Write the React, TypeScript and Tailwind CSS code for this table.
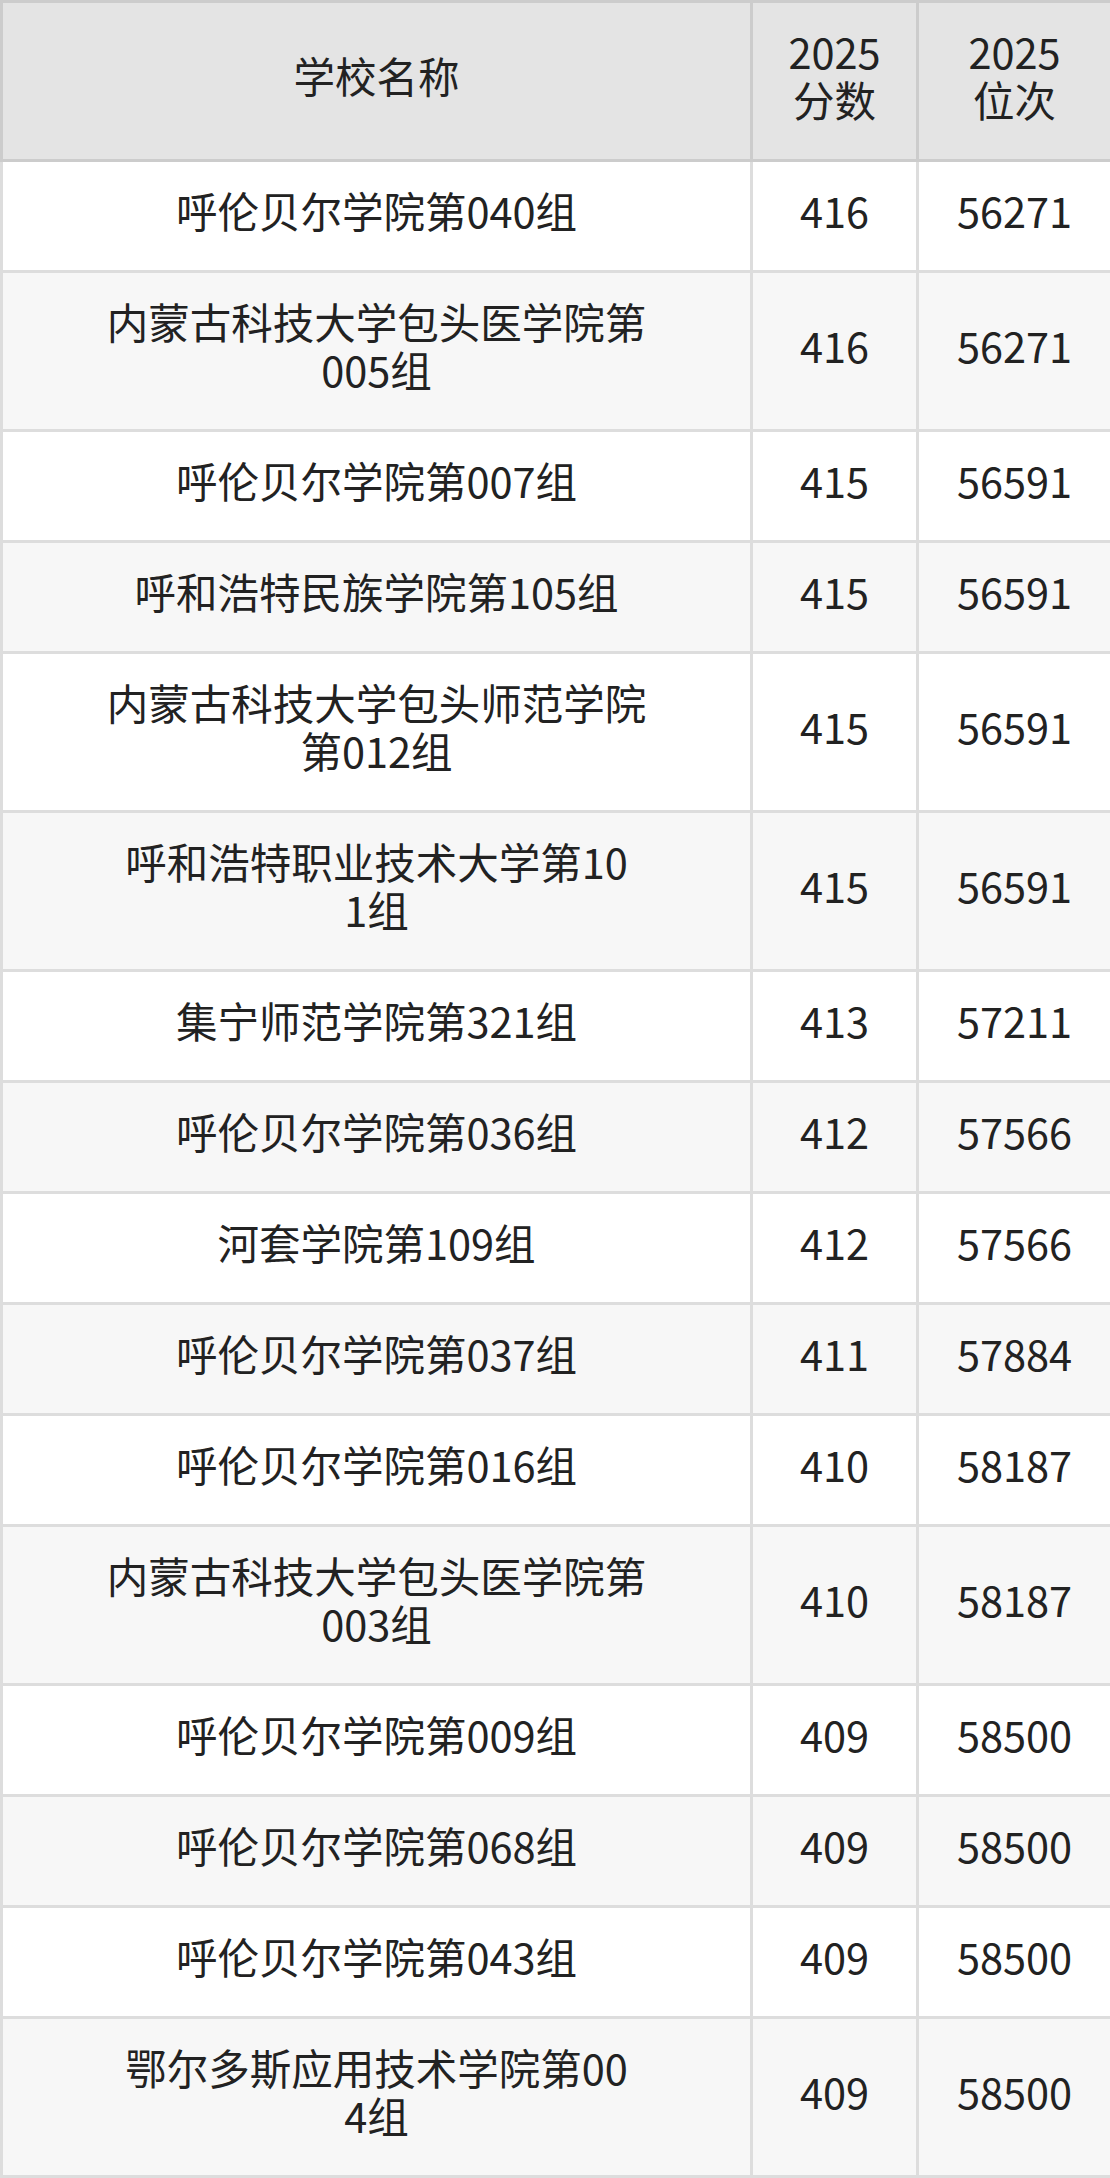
const rows: { name: string[]; score: string; rank: string }[] = [
  { name: ["呼伦贝尔学院第040组"], score: "416", rank: "56271" },
  { name: ["内蒙古科技大学包头医学院第", "005组"], score: "416", rank: "56271" },
  { name: ["呼伦贝尔学院第007组"], score: "415", rank: "56591" },
  { name: ["呼和浩特民族学院第105组"], score: "415", rank: "56591" },
  { name: ["内蒙古科技大学包头师范学院", "第012组"], score: "415", rank: "56591" },
  { name: ["呼和浩特职业技术大学第10", "1组"], score: "415", rank: "56591" },
  { name: ["集宁师范学院第321组"], score: "413", rank: "57211" },
  { name: ["呼伦贝尔学院第036组"], score: "412", rank: "57566" },
  { name: ["河套学院第109组"], score: "412", rank: "57566" },
  { name: ["呼伦贝尔学院第037组"], score: "411", rank: "57884" },
  { name: ["呼伦贝尔学院第016组"], score: "410", rank: "58187" },
  { name: ["内蒙古科技大学包头医学院第", "003组"], score: "410", rank: "58187" },
  { name: ["呼伦贝尔学院第009组"], score: "409", rank: "58500" },
  { name: ["呼伦贝尔学院第068组"], score: "409", rank: "58500" },
  { name: ["呼伦贝尔学院第043组"], score: "409", rank: "58500" },
  { name: ["鄂尔多斯应用技术学院第00", "4组"], score: "409", rank: "58500" },
];

const App = () => {
  return (
    <div className="w-[1110px] bg-white text-[#222] text-[41.5px] leading-[48px] font-['Noto_Sans_CJK_SC',sans-serif]">
      {/* header */}
      <div className="flex border-t-[3px] border-l-[3px] border-b-[3px] border-[#cccccc] bg-[#e4e4e4]">
        <div className="w-[750px] border-r-[3px] border-[#cccccc] flex items-center justify-center pt-[24px] pb-[36px]">
          学校名称
        </div>
        <div className="w-[166px] border-r-[3px] border-[#cccccc] flex flex-col items-center justify-center pt-[24px] pb-[36px]">
          <span>2025</span>
          <span>分数</span>
        </div>
        <div className="flex-1 flex flex-col items-center justify-center pt-[24px] pb-[36px]">
          <span>2025</span>
          <span>位次</span>
        </div>
      </div>

      {rows.map((r, i) => (
        <div
          key={i}
          className={`flex border-l-[3px] border-b-[3px] border-[#dddddd] ${i % 2 === 1 ? "bg-[#f7f7f7]" : "bg-white"}`}
        >
          <div className="w-[750px] border-r-[3px] border-[#dddddd] flex flex-col items-center justify-center pt-[24px] pb-[36px] whitespace-nowrap">
            {r.name.map((line, j) => (
              <span key={j}>{line}</span>
            ))}
          </div>
          <div className="w-[166px] border-r-[3px] border-[#dddddd] flex items-center justify-center pt-[24px] pb-[36px]">
            {r.score}
          </div>
          <div className="flex-1 flex items-center justify-center pt-[24px] pb-[36px]">{r.rank}</div>
        </div>
      ))}
    </div>
  );
};

export default App;
